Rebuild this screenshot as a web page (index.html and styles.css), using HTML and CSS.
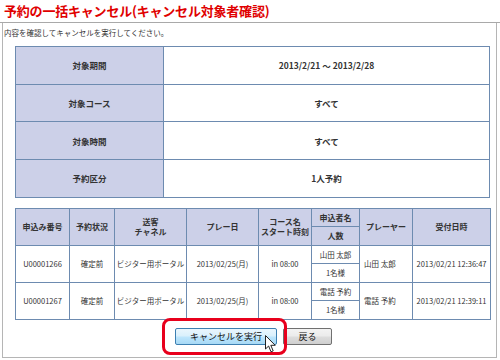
FILE: index.html
```html
<!DOCTYPE html>
<html lang="ja">
<head>
<meta charset="utf-8">
<title>予約の一括キャンセル</title>
<link rel="stylesheet" href="styles.css">
</head>
<body>
<div class="page">
  <h1 class="title">予約の一括キャンセル(キャンセル対象者確認)</h1>
  <div class="panel">
    <p class="lead">内容を確認してキャンセルを実行してください。</p>
    <table class="summary">
      <colgroup><col class="c-label"><col></colgroup>
      <tr><th>対象期間</th><td>2013/2/21 ～ 2013/2/28</td></tr>
      <tr><th>対象コース</th><td>すべて</td></tr>
      <tr><th>対象時間</th><td>すべて</td></tr>
      <tr><th>予約区分</th><td>1人予約</td></tr>
    </table>
    <table class="list">
      <colgroup>
        <col class="w1"><col class="w2"><col class="w3"><col class="w4"><col class="w5"><col class="w6"><col class="w7"><col class="w8">
      </colgroup>
      <tr>
        <th rowspan="2">申込み番号</th>
        <th rowspan="2">予約状況</th>
        <th rowspan="2"><span class="l">送客</span><span class="l">チャネル</span></th>
        <th rowspan="2">プレー日</th>
        <th rowspan="2"><span class="l">コース名</span><span class="l">スタート時刻</span></th>
        <th>申込者名</th>
        <th rowspan="2">プレーヤー</th>
        <th rowspan="2">受付日時</th>
      </tr>
      <tr><th>人数</th></tr>
      <tr>
        <td rowspan="2">U00001266</td>
        <td rowspan="2">確定前</td>
        <td rowspan="2">ビジター用ポータル</td>
        <td rowspan="2">2013/02/25(月)</td>
        <td rowspan="2">in 08:00</td>
        <td>山田 太郎</td>
        <td rowspan="2" class="left">山田 太郎</td>
        <td rowspan="2">2013/02/21 12:36:47</td>
      </tr>
      <tr><td>1名様</td></tr>
      <tr>
        <td rowspan="2">U00001267</td>
        <td rowspan="2">確定前</td>
        <td rowspan="2">ビジター用ポータル</td>
        <td rowspan="2">2013/02/25(月)</td>
        <td rowspan="2">in 08:00</td>
        <td>電話 予約</td>
        <td rowspan="2" class="left">電話 予約</td>
        <td rowspan="2">2013/02/21 12:39:11</td>
      </tr>
      <tr><td>1名様</td></tr>
    </table>
    <div class="actions">
      <span class="focus">
        <button class="btn btn-primary" type="button">キャンセルを実行</button>
        <span class="ring"></span>
        <svg class="cursor" width="12" height="18" viewBox="0 0 12 18" aria-hidden="true">
          <path d="M0.5 0.5 L0.5 14 L3.6 11 L6 16.8 L8.2 15.9 L5.8 10.3 L10.2 10.3 Z" fill="#fff" stroke="#222" stroke-width="1" stroke-linejoin="round"/>
        </svg>
      </span>
      <button class="btn" type="button">戻る</button>
    </div>
  </div>
</div>
</body>
</html>
```

FILE: styles.css
```css
html, body {
  margin: 0;
  padding: 0;
  background: #fff;
}

body {
  font-family: "Noto Sans CJK JP", "Noto Sans", sans-serif;
  color: #222;
}

.page {
  width: 500px;
  height: 360px;
  overflow: hidden;
}

.title {
  margin: 0;
  height: 23px;
  box-sizing: border-box;
  padding: 3px 0 0 4px;
  font-size: 13px;
  line-height: 16px;
  font-weight: bold;
  color: #e00000;
  border-bottom: 1px solid #a9a9a9;
  letter-spacing: -0.2px;
}

.panel {
  margin: 0 3px 0 2px;
  height: 335px;
  box-sizing: border-box;
  border: 1px solid #b5b5b5;
  border-top: 0;
}

.lead {
  margin: 0;
  padding: 4px 0 0 1px;
  font-size: 7.5px;
  line-height: 12px;
  color: #333;
}

table {
  border-collapse: collapse;
  table-layout: fixed;
  width: 475px;
  margin-left: 12px;
}

th, td {
  border: 1px solid #6d8bb0;
  padding: 0;
  text-align: center;
  vertical-align: middle;
}

th {
  background: #ccd0e8;
  font-weight: bold;
  color: #333;
}

.summary {
  margin-top: 7px;
}

.summary .c-label {
  width: 148px;
}

.summary th,
.summary td {
  height: 36.7px;
  font-size: 8.5px;
  font-weight: bold;
  color: #333;
}

.list {
  margin-top: 10px;
}

.list .w1 { width: 54px; }
.list .w2 { width: 45px; }
.list .w3 { width: 72px; }
.list .w4 { width: 72px; }
.list .w5 { width: 53px; }
.list .w6 { width: 48px; }
.list .w7 { width: 53px; }
.list .w8 { width: 78px; }

.list th,
.list td {
  height: 17.5px;
  font-size: 7.5px;
  line-height: 10px;
  color: #333;
}

.list th {
  font-size: 8px;
}

.list th .l {
  display: block;
  line-height: 10px;
}

.list td {
  white-space: nowrap;
}

.list td.left {
  text-align: left;
  padding-left: 4px;
}

.actions {
  display: flex;
  justify-content: center;
  gap: 6px;
  margin-top: 8px;
  padding-left: 8px;
}

.focus {
  position: relative;
  display: inline-flex;
}

.btn {
  height: 17px;
  width: 49px;
  padding: 0;
  box-sizing: border-box;
  font-family: "Noto Sans CJK JP", sans-serif;
  font-size: 9px;
  line-height: 15px;
  color: #111;
  border: 1px solid #707070;
  border-radius: 2px;
  background: linear-gradient(#f3f3f3 0%, #ebebeb 48%, #dddddd 52%, #cfcfcf 100%);
}

.btn-primary {
  width: 102px;
  border-color: #3c7fb1;
  background: linear-gradient(#eaf6fd 0%, #d9f0fc 48%, #bee6fd 52%, #a7d9f5 100%);
}

.ring {
  position: absolute;
  left: -13px;
  top: -10px;
  width: 125px;
  height: 37px;
  box-sizing: border-box;
  border: 3px solid #e8001c;
  border-radius: 8px;
  pointer-events: none;
}

.cursor {
  position: absolute;
  left: 90px;
  top: 7px;
}
```
